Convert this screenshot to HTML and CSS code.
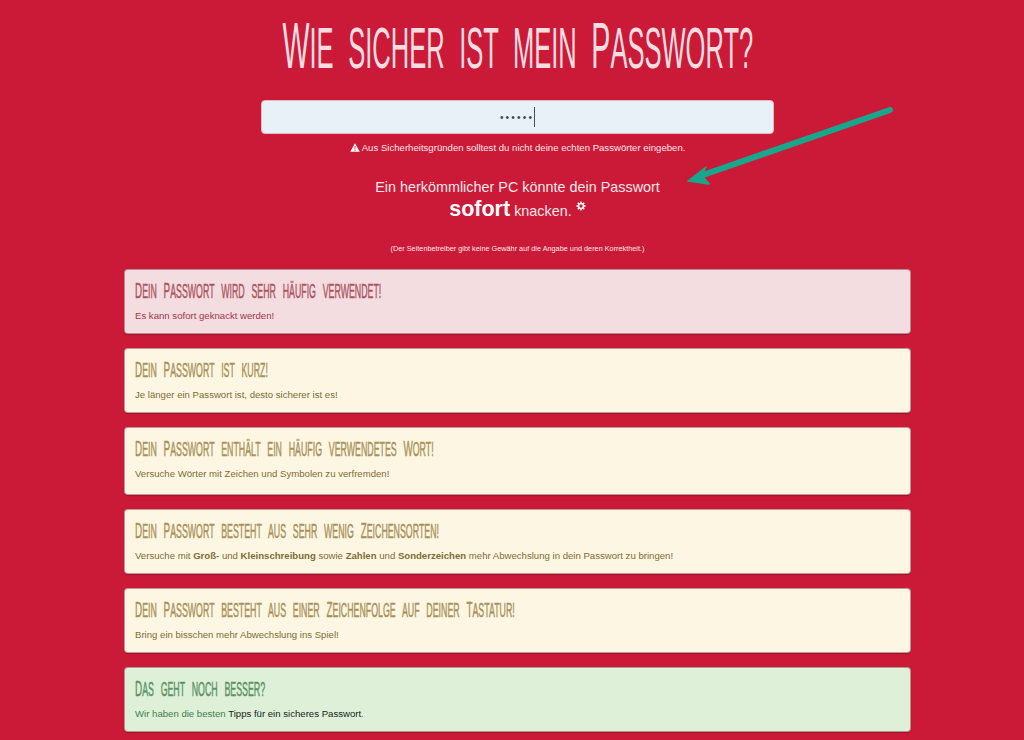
FILE: index.html
```html
<!DOCTYPE html>
<html lang="de">
<head>
<meta charset="utf-8">
<title>Wie sicher ist mein Passwort?</title>
<link rel="stylesheet" href="styles.css">
</head>
<body>
<main class="page">
  <h1 class="title"><span class="squeeze"><span class="cap">W</span>ie sicher ist mein <span class="cap">P</span>asswort?</span></h1>
  <div class="field"><span class="dots">••••••</span><span class="caret"></span></div>
  <p class="warning">
    <svg class="warn-icon" viewBox="0 0 12 11" aria-hidden="true"><path d="M6 .3 11.8 10.7H.2Z" fill="#fff"/><path d="M5.4 3.8h1.2l-.2 3.8h-.8ZM5.4 8.3h1.2v1.2H5.4Z" fill="#cb1a37"/></svg>
    Aus Sicherheitsgründen solltest du nicht deine echten Passwörter eingeben.
  </p>
  <div class="result">
    <p class="result-line">Ein herkömmlicher PC könnte dein Passwort</p>
    <p class="result-line second"><strong class="big">sofort</strong> knacken. <svg class="gear" viewBox="0 0 12 12" aria-hidden="true"><circle cx="6" cy="6" r="3" fill="none" stroke="#fff" stroke-width="2"/><path d="M6 .5v2.2M6 9.3v2.2M.5 6h2.2M9.3 6h2.2M2.1 2.1l1.6 1.6M8.3 8.3l1.6 1.6M2.1 9.9l1.6-1.6M8.3 3.7l1.6-1.6" stroke="#fff" stroke-width="1.6" fill="none"/></svg></p>
  </div>
  <p class="disclaimer">(Der Seitenbetreiber gibt keine Gewähr auf die Angabe und deren Korrektheit.)</p>
  <section class="alerts">
    <div class="alert danger"><h2><span class="squeeze"><span class="cap">D</span>ein <span class="cap">P</span>asswort wird sehr häufig verwendet!</span></h2><p>Es kann sofort geknackt werden!</p></div>
    <div class="alert warn"><h2><span class="squeeze"><span class="cap">D</span>ein <span class="cap">P</span>asswort ist kurz!</span></h2><p>Je länger ein Passwort ist, desto sicherer ist es!</p></div>
    <div class="alert warn tall"><h2><span class="squeeze"><span class="cap">D</span>ein <span class="cap">P</span>asswort enthält ein häufig verwendetes <span class="cap">W</span>ort!</span></h2><p>Versuche Wörter mit Zeichen und Symbolen zu verfremden!</p></div>
    <div class="alert warn"><h2><span class="squeeze"><span class="cap">D</span>ein <span class="cap">P</span>asswort besteht aus sehr wenig <span class="cap">Z</span>eichensorten!</span></h2><p>Versuche mit <b>Groß-</b> und <b>Kleinschreibung</b> sowie <b>Zahlen</b> und <b>Sonderzeichen</b> mehr Abwechslung in dein Passwort zu bringen!</p></div>
    <div class="alert warn"><h2><span class="squeeze"><span class="cap">D</span>ein <span class="cap">P</span>asswort besteht aus einer <span class="cap">Z</span>eichenfolge auf deiner <span class="cap">T</span>astatur!</span></h2><p>Bring ein bisschen mehr Abwechslung ins Spiel!</p></div>
    <div class="alert good"><h2><span class="squeeze"><span class="cap">D</span>as geht noch besser?</span></h2><p>Wir haben die besten <a href="#">Tipps für ein sicheres Passwort</a>.</p></div>
  </section>
</main>
<svg class="arrow" viewBox="0 0 1024 740" aria-hidden="true">
  <path d="M890 110 700 176" stroke="#17a78c" stroke-width="6" stroke-linecap="round" fill="none"/>
  <path d="M688 181 706 167 702 175 709 184Z" fill="#17a78c" stroke="#17a78c" stroke-width="1.5" stroke-linejoin="round"/>
</svg>
</body>
</html>
```
FILE: styles.css
```css
html, body { margin: 0; padding: 0; }
body {
  background: #cb1a37;
  height: 740px;
  overflow: hidden;
  font-family: "Liberation Sans", Arial, sans-serif;
  color: #fff;
}
.page { display: flex; flex-direction: column; align-items: center; padding-left: 11px; }
.squeeze {
  display: inline-block;
  flex: none;
  white-space: nowrap;
  font-family: "Liberation Sans Narrow", "Liberation Sans", sans-serif;
  text-transform: uppercase;
  transform-origin: left center;
}
.cap { font-size: 1.12em; }
.title {
  margin: 14px 0 0;
  height: 64px;
  line-height: 64px;
  font-size: 58px;
  font-weight: 400;
  color: #f9dde1;
  display: flex;
  justify-content: center;
  width: 1024px;
}
.title .squeeze { transform: scaleX(.44); transform-origin: center; word-spacing: 17px; }
.field {
  margin-top: 22px;
  box-sizing: border-box;
  width: 513px;
  height: 34px;
  background: #e8f0f8;
  border-radius: 4px;
  border: 1px solid #e3b9c2;
  display: flex;
  align-items: center;
  justify-content: center;
  color: #3c4654;
  font-size: 10px;
}
.dots { letter-spacing: 2.2px; }
.caret { width: 1px; height: 20px; background: #46505c; }
.warning {
  margin: 7px 0 0;
  font-size: 9.6px;
  line-height: 13px;
  color: #f9e6e9;
  text-align: center;
}
.warn-icon { width: 10px; height: 9px; vertical-align: -1px; }
.result { margin-top: 24px; text-align: center; font-size: 14.4px; color: #f9e6e9; }
.result-line { margin: 0; line-height: 18px; }
.second { line-height: 26px; }
.big { font-size: 21.5px; font-weight: 700; color: #fff; }
.gear { width: 10px; height: 10px; vertical-align: 5px; }
.disclaimer { margin: 20px 0 0; font-size: 7.3px; line-height: 10px; color: #f9e6e9; text-align: center; }
.alerts { margin-top: 15px; width: 787px; display: flex; flex-direction: column; gap: 14px; }
.alert {
  box-sizing: border-box;
  height: 65px;
  padding: 7px 10px 0;
  border-radius: 4px;
  border: 1px solid rgba(120,40,50,.45);
  box-shadow: 0 1px 1px rgba(90,10,25,.4);
}
.alert.tall { height: 68px; }
.alert h2 { margin: 0; font-size: 20.5px; font-weight: 400; line-height: 27px; height: 27px; }
.alert .squeeze { transform: scaleX(.43); word-spacing: 10px; -webkit-text-stroke: .5px currentColor; }
.alert p { margin: 5px 0 0; font-size: 9.6px; line-height: 13px; }
.danger { background: #f3dde0; color: #ad5560; }
.danger p { color: #a3364a; }
.warn { background: #fdf6e2; color: #a8925a; }
.warn p { color: #7f6c34; }
.good { background: #dff0d8; color: #5a9466; }
.good p { color: #3f7f4b; }
.good a { color: #16231a; text-decoration: none; }
.arrow { position: absolute; left: 0; top: 0; width: 1024px; height: 740px; pointer-events: none; }
```
